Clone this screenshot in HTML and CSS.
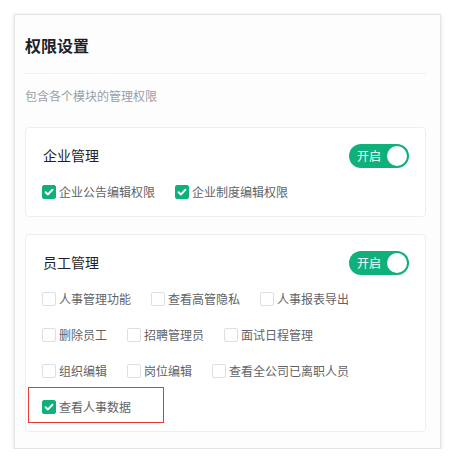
FILE: index.html
```html
<!DOCTYPE html>
<html lang="zh-CN">
<head>
<meta charset="utf-8">
<title>权限设置</title>
<link rel="stylesheet" href="styles.css">
</head>
<body>
<div class="panel">
  <h1 class="panel-title">权限设置</h1>
  <div class="divider"></div>
  <p class="panel-desc">包含各个模块的管理权限</p>

  <section class="module">
    <div class="module-head">
      <span class="module-name">企业管理</span>
      <span class="switch"><span class="switch-text">开启</span><span class="switch-knob"></span></span>
    </div>
    <div class="opts">
      <div class="opt-row">
        <label class="opt"><span class="box checked"><svg viewBox="0 0 14 14"><path d="M3.6 7.2 L6 9.4 L10.4 4.8" /></svg></span><span class="opt-text">企业公告编辑权限</span></label>
        <label class="opt"><span class="box checked"><svg viewBox="0 0 14 14"><path d="M3.6 7.2 L6 9.4 L10.4 4.8" /></svg></span><span class="opt-text">企业制度编辑权限</span></label>
      </div>
    </div>
  </section>

  <section class="module">
    <div class="module-head">
      <span class="module-name">员工管理</span>
      <span class="switch"><span class="switch-text">开启</span><span class="switch-knob"></span></span>
    </div>
    <div class="opts">
      <div class="opt-row">
        <label class="opt"><span class="box"></span><span class="opt-text">人事管理功能</span></label>
        <label class="opt"><span class="box"></span><span class="opt-text">查看高管隐私</span></label>
        <label class="opt"><span class="box"></span><span class="opt-text">人事报表导出</span></label>
      </div>
      <div class="opt-row">
        <label class="opt"><span class="box"></span><span class="opt-text">删除员工</span></label>
        <label class="opt"><span class="box"></span><span class="opt-text">招聘管理员</span></label>
        <label class="opt"><span class="box"></span><span class="opt-text">面试日程管理</span></label>
      </div>
      <div class="opt-row">
        <label class="opt"><span class="box"></span><span class="opt-text">组织编辑</span></label>
        <label class="opt"><span class="box"></span><span class="opt-text">岗位编辑</span></label>
        <label class="opt"><span class="box"></span><span class="opt-text">查看全公司已离职人员</span></label>
      </div>
      <div class="opt-row">
        <label class="opt"><span class="box checked"><svg viewBox="0 0 14 14"><path d="M3.6 7.2 L6 9.4 L10.4 4.8" /></svg></span><span class="opt-text">查看人事数据</span><span class="mark"></span></label>
      </div>
    </div>
  </section>
</div>
</body>
</html>
```

FILE: styles.css
```css
* { box-sizing: border-box; }

html, body {
  margin: 0;
  padding: 0;
  background: #ffffff;
}

body {
  font-family: "Noto Sans CJK SC", "Noto Sans", sans-serif;
  color: #303133;
}

.panel {
  margin: 14px 0 0 14px;
  width: 427px;
  height: 435px;
  background: #fdfdfd;
  border: 1px solid #e4e4e4;
  box-shadow: 0 1px 4px rgba(0, 0, 0, 0.12);
  padding: 18px 14px 16px 10px;
}

.panel-title {
  margin: 0;
  font-size: 16px;
  line-height: 24px;
  font-weight: 700;
  color: #1d2129;
}

.divider {
  height: 1px;
  background: #eeeff2;
  margin-top: 16px;
}

.panel-desc {
  margin: 13px 0 0;
  font-size: 12px;
  line-height: 18px;
  color: #9a9ea8;
}

.module {
  background: #ffffff;
  border: 1px solid #eceef4;
  border-radius: 4px;
  padding: 16px 16px 14px 16px;
  margin-top: 22px;
}

.module + .module {
  margin-top: 17px;
}

.module-head {
  display: flex;
  align-items: center;
  justify-content: space-between;
  height: 24px;
}

.module-name {
  font-size: 14px;
  line-height: 20px;
  color: #1f2329;
  padding-left: 1px;
  margin-top: -2px;
}

.switch {
  display: flex;
  align-items: center;
  width: 60px;
  height: 24px;
  border-radius: 12px;
  background: #0fb07a;
  padding: 0 2px 0 8px;
  justify-content: space-between;
}

.switch-text {
  color: #ffffff;
  font-size: 12px;
  line-height: 24px;
}

.switch-knob {
  width: 20px;
  height: 20px;
  border-radius: 50%;
  background: #ffffff;
}

.opts {
  display: flex;
  flex-direction: column;
  gap: 16px;
  margin-top: 14px;
}

.opt-row {
  display: flex;
  column-gap: 20px;
}

.opt {
  position: relative;
  display: flex;
  align-items: center;
  height: 20px;
  font-size: 12px;
  color: #5f6368;
}

.box {
  width: 14px;
  height: 14px;
  border: 1px solid #dcdfe6;
  border-radius: 2px;
  background: #ffffff;
  margin-right: 3px;
  display: flex;
  align-items: center;
  justify-content: center;
}

.box.checked {
  background: #0fb07a;
  border-color: #0fb07a;
}

.box svg {
  width: 14px;
  height: 14px;
  flex: none;
}

.box svg path {
  fill: none;
  stroke: #ffffff;
  stroke-width: 2;
  stroke-linecap: round;
  stroke-linejoin: round;
}

.opt-text {
  line-height: 20px;
}

.mark {
  position: absolute;
  left: -14px;
  top: -10px;
  width: 136px;
  height: 36px;
  border: 1px solid #e53935;
  pointer-events: none;
}
```
